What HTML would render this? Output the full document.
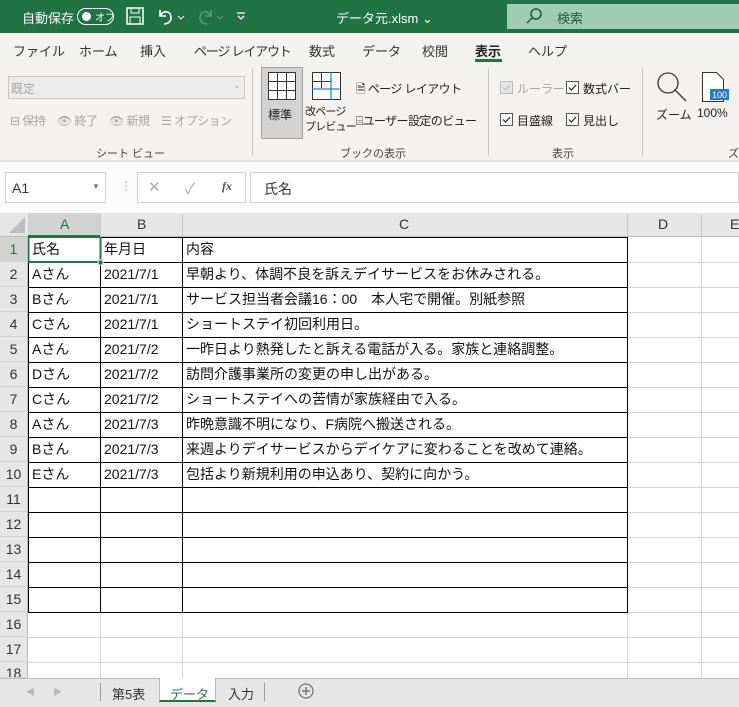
<!DOCTYPE html><html><head><meta charset="utf-8"><style>
*{margin:0;padding:0;box-sizing:border-box}
body{width:739px;height:707px;overflow:hidden;background:#fff;font-family:"Liberation Sans","Noto Sans CJK JP",sans-serif;position:relative;font-size:12px;color:#222}
.a{position:absolute;white-space:nowrap}
.g{color:#a6a6a6}
.cell{position:absolute;font-size:14px;color:#111;line-height:25px;padding-left:4px;white-space:nowrap}
.rh{position:absolute;left:0;width:28px;text-align:center;font-size:14px;color:#333;line-height:25px;background:#e6e6e6;border-bottom:1px solid #d4d4d4;border-right:1px solid #bdbdbd}
.cb{position:absolute;width:13px;height:13px}
</style></head><body>
<div class="a" style="left:0;top:0;width:739px;height:33px;background:#217346"></div>
<div class="a" style="left:507px;top:4px;width:232px;height:25px;background:#9fcdb3"></div>
<div class="a" style="left:22px;top:8px;color:#fff;font-size:13px">自動保存</div>
<div class="a" style="left:77px;top:8px;width:37px;height:17px;border:1.5px solid #fff;border-radius:9px"></div>
<div class="a" style="left:82px;top:12px;width:9px;height:9px;border-radius:5px;background:#fff"></div>
<div class="a" style="left:95px;top:9px;color:#fff;font-size:10px">オフ</div>
<svg class="a" style="left:126px;top:7px" width="20" height="19"><rect x="1" y="1" width="16" height="16" fill="none" stroke="#fff" stroke-width="1.5"/><rect x="5" y="1" width="8" height="5" fill="none" stroke="#fff"/><rect x="4" y="10" width="10" height="7" fill="none" stroke="#fff"/></svg>
<svg class="a" style="left:156px;top:7px" width="30" height="19"><path d="M4 3v6h6M4 9c3-6 11-6 11 2 0 4-4 6-7 6" fill="none" stroke="#fff" stroke-width="1.6"/><path d="M22 9l3 3 3-3" fill="none" stroke="#fff"/></svg>
<svg class="a" style="left:195px;top:7px" width="30" height="19"><path d="M16 3v6h-6M16 9c-3-6-11-6-11 2 0 4 4 6 7 6" fill="none" stroke="#5a9a74" stroke-width="1.6"/><path d="M22 9l3 3 3-3" fill="none" stroke="#5a9a74"/></svg>
<svg class="a" style="left:236px;top:11px" width="10" height="10"><path d="M1 2h8M2 5l3 3 3-3" fill="none" stroke="#fff" stroke-width="1.3"/></svg>
<div class="a" style="left:336px;top:8px;color:#fff;font-size:13px">データ元.xlsm ⌄</div>
<svg class="a" style="left:525px;top:7px" width="20" height="20"><circle cx="11" cy="7" r="5" fill="none" stroke="#1e5e38" stroke-width="1.5"/><path d="M7 11l-5 5" stroke="#1e5e38" stroke-width="1.5"/></svg>
<div class="a" style="left:557px;top:8px;color:#1e5e38;font-size:13px">検索</div>
<div class="a" style="left:0;top:33px;width:739px;height:127px;background:#f3f2f1"></div>
<div class="a" style="left:13px;top:41px;font-size:13px;color:#333">ファイル</div>
<div class="a" style="left:79px;top:41px;font-size:13px;color:#333">ホーム</div>
<div class="a" style="left:140px;top:41px;font-size:13px;color:#333">挿入</div>
<div class="a" style="left:194px;top:41px;font-size:13px;color:#333;letter-spacing:-1.2px">ページ レイアウト</div>
<div class="a" style="left:309px;top:41px;font-size:13px;color:#333">数式</div>
<div class="a" style="left:362px;top:41px;font-size:13px;color:#333">データ</div>
<div class="a" style="left:422px;top:41px;font-size:13px;color:#333">校閲</div>
<div class="a" style="left:475px;top:41px;font-size:13px;color:#222;font-weight:bold">表示</div>
<div class="a" style="left:475px;top:59px;width:27px;height:3px;background:#217346"></div>
<div class="a" style="left:528px;top:41px;font-size:13px;color:#333">ヘルプ</div>
<div class="a" style="left:8px;top:76px;width:237px;height:23px;border:1px solid #c8c8c8;background:#ececec"></div>
<div class="a g" style="left:11px;top:80px;font-size:12px">既定</div>
<div class="a g" style="left:233px;top:80px;font-size:9px">⌄</div>
<div class="a g" style="left:10px;top:112px;font-size:12px;letter-spacing:-0.5px">⊟ 保持　👁 終了　👁 新規　☰ オプション</div>
<div class="a" style="left:96px;top:145px;font-size:11px;color:#444">シート ビュー</div>
<div class="a" style="left:252px;top:68px;width:1px;height:88px;background:#c8c8c8"></div>
<div class="a" style="left:261px;top:67px;width:42px;height:72px;background:#d2d2d2;border:1px solid #a0a0a0"></div>
<svg class="a" style="left:268px;top:72px" width="28" height="28"><rect x=".5" y=".5" width="27" height="27" fill="#fff" stroke="#333"/><path d="M9.5 0v28M18.5 0v28M0 9.5h28M0 18.5h28" stroke="#333"/></svg>
<div class="a" style="left:268px;top:106px;font-size:12px;color:#222">標準</div>
<svg class="a" style="left:312px;top:72px" width="30" height="28"><rect x=".5" y=".5" width="28" height="27" fill="#fff" stroke="#333"/><path d="M9.5 0v16M0 9.5h19" stroke="#333"/><path d="M19 0v28M0 17h29" stroke="#1e7bd0" stroke-width="1.2"/></svg>
<div class="a" style="left:305px;top:105px;font-size:11px;color:#222;line-height:15px;letter-spacing:-0.8px">改ページ<br>プレビュー</div>
<div class="a" style="left:356px;top:80px;font-size:12px;color:#222;letter-spacing:-0.6px">🗎 ページ レイアウト</div>
<div class="a" style="left:356px;top:112px;font-size:12px;color:#222;letter-spacing:-0.6px">⌸ユーザー設定のビュー</div>
<div class="a" style="left:340px;top:145px;font-size:11px;color:#444">ブックの表示</div>
<div class="a" style="left:488px;top:68px;width:1px;height:88px;background:#c8c8c8"></div>
<svg class="cb" style="left:500px;top:81px"><rect x=".5" y=".5" width="12" height="12" fill="#e4e4e4" stroke="#bbb"/><path d="M3 6.5l2.5 2.5 4.5-5" fill="none" stroke="#bbb" stroke-width="1.2"/></svg>
<div class="a g" style="left:517px;top:80px">ルーラー</div>
<svg class="cb" style="left:566px;top:81px"><rect x=".5" y=".5" width="12" height="12" fill="#fff" stroke="#555"/><path d="M3 6.5l2.5 2.5 4.5-5" fill="none" stroke="#222" stroke-width="1.2"/></svg>
<div class="a" style="left:583px;top:80px">数式バー</div>
<svg class="cb" style="left:500px;top:113px"><rect x=".5" y=".5" width="12" height="12" fill="#fff" stroke="#555"/><path d="M3 6.5l2.5 2.5 4.5-5" fill="none" stroke="#222" stroke-width="1.2"/></svg>
<div class="a" style="left:517px;top:112px">目盛線</div>
<svg class="cb" style="left:566px;top:113px"><rect x=".5" y=".5" width="12" height="12" fill="#fff" stroke="#555"/><path d="M3 6.5l2.5 2.5 4.5-5" fill="none" stroke="#222" stroke-width="1.2"/></svg>
<div class="a" style="left:583px;top:112px">見出し</div>
<div class="a" style="left:552px;top:145px;font-size:11px;color:#444">表示</div>
<div class="a" style="left:642px;top:68px;width:1px;height:88px;background:#c8c8c8"></div>
<svg class="a" style="left:656px;top:71px" width="34" height="32"><circle cx="12" cy="12" r="10" fill="none" stroke="#333" stroke-width="1.3"/><path d="M19 19l11 11" stroke="#333" stroke-width="1.3"/></svg>
<div class="a" style="left:656px;top:106px;color:#222">ズーム</div>
<svg class="a" style="left:702px;top:72px" width="30" height="30"><path d="M.5 .5h14l7 7v22h-21z" fill="#fff" stroke="#333"/><rect x="8" y="17" width="19" height="11" fill="#1e7bd0"/><text x="10" y="26" font-size="9" fill="#fff" font-family="Liberation Sans">100</text></svg>
<div class="a" style="left:697px;top:106px;color:#222">100%</div>
<div class="a" style="left:728px;top:145px;font-size:11px;color:#444">ズ</div>
<div class="a" style="left:0;top:160px;width:739px;height:53px;background:#fcfcfc;border-top:2px solid #e0e0e0"></div>
<div class="a" style="left:5px;top:172px;width:101px;height:31px;border:1px solid #d0d0d0;background:#fff"></div>
<div class="a" style="left:12px;top:180px;font-size:14px;color:#333">A1</div>
<div class="a" style="left:92px;top:182px;font-size:8px;color:#777">▼</div>
<div class="a" style="left:120px;top:179px;color:#aaa">⋮</div>
<div class="a" style="left:137px;top:172px;width:109px;height:31px;border:1px solid #d0d0d0;background:#fff"></div>
<div class="a" style="left:148px;top:178px;font-size:15px;color:#aaa">✕</div>
<div class="a" style="left:185px;top:178px;font-size:15px;color:#aaa">✓</div>
<div class="a" style="left:222px;top:179px;font-size:12px;color:#555;font-style:italic;font-family:'Liberation Serif',serif;font-weight:bold">fx</div>
<div class="a" style="left:250px;top:172px;width:489px;height:31px;border:1px solid #d0d0d0;background:#fff"></div>
<div class="a" style="left:264px;top:179px;font-size:14px;color:#333">氏名</div>
<div class="a" style="left:0;top:213px;width:739px;height:24px;background:#e6e6e6;border-bottom:1px solid #bdbdbd"></div>
<svg class="a" style="left:8px;top:216px" width="18" height="18"><path d="M17 1v16H1z" fill="#bdbdbd"/></svg>
<div class="a" style="left:28px;top:213px;width:72px;height:24px;background:#d2d2d2;border-bottom:2px solid #217346"></div>
<div class="a" style="left:60px;top:216px;font-size:14px;color:#217346">A</div>
<div class="a" style="left:137px;top:216px;font-size:14px;color:#333">B</div>
<div class="a" style="left:399px;top:216px;font-size:14px;color:#333">C</div>
<div class="a" style="left:658px;top:216px;font-size:14px;color:#333">D</div>
<div class="a" style="left:730px;top:216px;font-size:14px;color:#333">E</div>
<div class="a" style="left:100px;top:214px;width:1px;height:23px;background:#c8c8c8"></div>
<div class="a" style="left:182px;top:214px;width:1px;height:23px;background:#c8c8c8"></div>
<div class="a" style="left:627px;top:214px;width:1px;height:23px;background:#c8c8c8"></div>
<div class="a" style="left:701px;top:214px;width:1px;height:23px;background:#c8c8c8"></div>
<svg class="a" style="left:0;top:237px" width="739" height="441">
<g stroke="#d4d4d4"><path d="M28 25.5h711M28 50.5h711M28 75.5h711M28 100.5h711M28 125.5h711M28 150.5h711M28 175.5h711M28 200.5h711M28 225.5h711M28 250.5h711M28 275.5h711M28 300.5h711M28 325.5h711M28 350.5h711M28 375.5h711M28 400.5h711M28 425.5h711"/><path d="M100.5 0v441M182.5 0v441M627.5 0v441M701.5 0v441"/></g>
<g stroke="#000"><path d="M28 0.5h600M28 25.5h600M28 50.5h600M28 75.5h600M28 100.5h600M28 125.5h600M28 150.5h600M28 175.5h600M28 200.5h600M28 225.5h600M28 250.5h600M28 275.5h600M28 300.5h600M28 325.5h600M28 350.5h600M28 375.5h600"/><path d="M28.5 0v375M100.5 0v375M182.5 0v375M627.5 0v375"/></g>
<rect x="28.5" y="0" width="72" height="25" fill="none" stroke="#217346" stroke-width="2"/><rect x="98" y="23" width="5" height="5" fill="#217346" stroke="#fff"/>
</svg>
<div class="rh" style="top:237px;height:25px;background:#d2d2d2;color:#217346">1</div>
<div class="rh" style="top:262px;height:25px">2</div><div class="rh" style="top:287px;height:25px">3</div><div class="rh" style="top:312px;height:25px">4</div><div class="rh" style="top:337px;height:25px">5</div><div class="rh" style="top:362px;height:25px">6</div><div class="rh" style="top:387px;height:25px">7</div><div class="rh" style="top:412px;height:25px">8</div><div class="rh" style="top:437px;height:25px">9</div><div class="rh" style="top:462px;height:25px">10</div><div class="rh" style="top:487px;height:25px">11</div><div class="rh" style="top:512px;height:25px">12</div><div class="rh" style="top:537px;height:25px">13</div><div class="rh" style="top:562px;height:25px">14</div><div class="rh" style="top:587px;height:25px">15</div><div class="rh" style="top:612px;height:25px">16</div><div class="rh" style="top:637px;height:25px">17</div><div class="rh" style="top:662px;height:16px;line-height:22px;overflow:hidden">18</div>
<div class="cell" style="left:28px;top:237px">氏名</div><div class="cell" style="left:100px;top:237px">年月日</div><div class="cell" style="left:182px;top:237px">内容</div>
<div class="cell" style="left:28px;top:262px">Aさん</div><div class="cell" style="left:100px;top:262px">2021/7/1</div><div class="cell" style="left:182px;top:262px">早朝より、体調不良を訴えデイサービスをお休みされる。</div>
<div class="cell" style="left:28px;top:287px">Bさん</div><div class="cell" style="left:100px;top:287px">2021/7/1</div><div class="cell" style="left:182px;top:287px">サービス担当者会議16：00　本人宅で開催。別紙参照</div>
<div class="cell" style="left:28px;top:312px">Cさん</div><div class="cell" style="left:100px;top:312px">2021/7/1</div><div class="cell" style="left:182px;top:312px">ショートステイ初回利用日。</div>
<div class="cell" style="left:28px;top:337px">Aさん</div><div class="cell" style="left:100px;top:337px">2021/7/2</div><div class="cell" style="left:182px;top:337px">一昨日より熱発したと訴える電話が入る。家族と連絡調整。</div>
<div class="cell" style="left:28px;top:362px">Dさん</div><div class="cell" style="left:100px;top:362px">2021/7/2</div><div class="cell" style="left:182px;top:362px">訪問介護事業所の変更の申し出がある。</div>
<div class="cell" style="left:28px;top:387px">Cさん</div><div class="cell" style="left:100px;top:387px">2021/7/2</div><div class="cell" style="left:182px;top:387px">ショートステイへの苦情が家族経由で入る。</div>
<div class="cell" style="left:28px;top:412px">Aさん</div><div class="cell" style="left:100px;top:412px">2021/7/3</div><div class="cell" style="left:182px;top:412px">昨晩意識不明になり、F病院へ搬送される。</div>
<div class="cell" style="left:28px;top:437px">Bさん</div><div class="cell" style="left:100px;top:437px">2021/7/3</div><div class="cell" style="left:182px;top:437px">来週よりデイサービスからデイケアに変わることを改めて連絡。</div>
<div class="cell" style="left:28px;top:462px">Eさん</div><div class="cell" style="left:100px;top:462px">2021/7/3</div><div class="cell" style="left:182px;top:462px">包括より新規利用の申込あり、契約に向かう。</div>
<div class="a" style="left:0;top:678px;width:739px;height:29px;background:#e6e6e6;border-top:1px solid #bdbdbd"></div>
<div class="a" style="left:26px;top:685px;font-size:9px;color:#bbb">◀　　▶</div>
<div class="a" style="left:100px;top:683px;width:1px;height:18px;background:#999"></div>
<div class="a" style="left:112px;top:684px;font-size:13px;color:#333">第5表</div>
<div class="a" style="left:159px;top:678px;width:57px;height:24px;background:#fff;border-bottom:2px solid #217346;border-left:1px solid #bbb;border-right:1px solid #bbb"></div>
<div class="a" style="left:170px;top:684px;font-size:13px;color:#217346">データ</div>
<div class="a" style="left:228px;top:684px;font-size:13px;color:#333">入力</div>
<div class="a" style="left:264px;top:683px;width:1px;height:18px;background:#999"></div>
<svg class="a" style="left:298px;top:683px" width="16" height="16"><circle cx="8" cy="8" r="7" fill="none" stroke="#777" stroke-width="1.3"/><path d="M8 4v8M4 8h8" stroke="#777" stroke-width="1.5"/></svg>
</body></html>
